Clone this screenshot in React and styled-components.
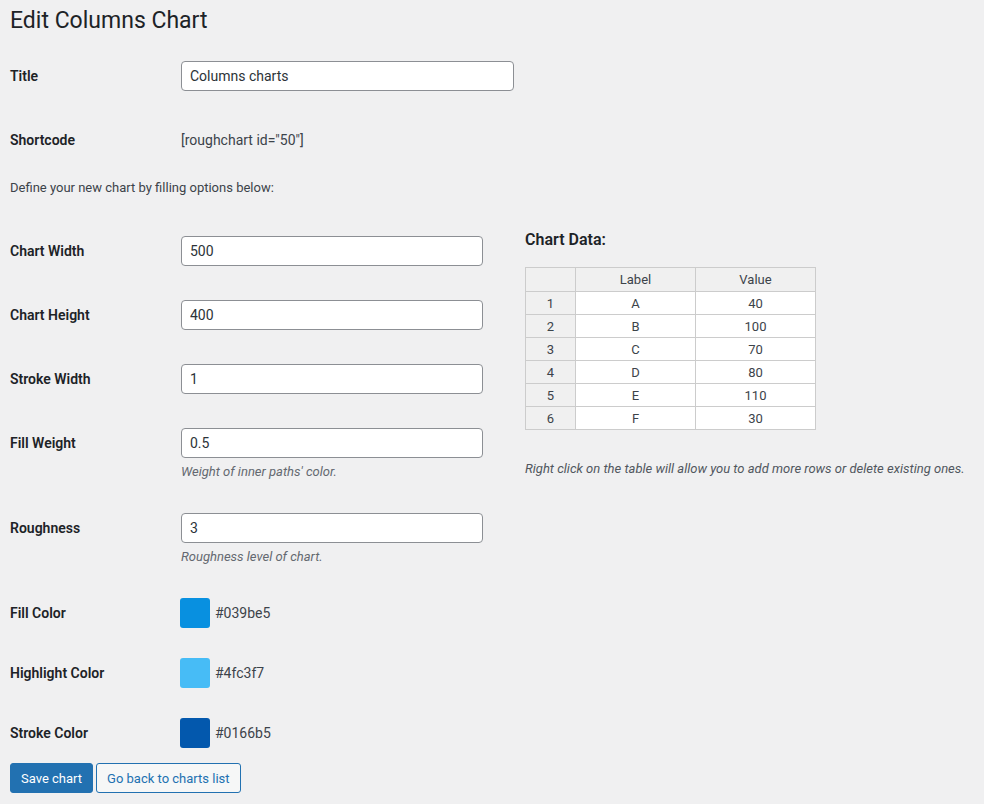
import styled, { createGlobalStyle } from 'styled-components';

const GlobalStyle = createGlobalStyle`
	html, body {
		margin: 0;
		padding: 0;
		background: #f0f0f1;
	}
	body {
		font-family: Roboto, "Liberation Sans", sans-serif;
		font-size: 13px;
		color: #3c434a;
	}
`;

const Wrap = styled.div`
	padding: 0 10px;
	width: 964px;
	height: 804px;
	overflow: hidden;
`;

const Heading = styled.h1`
	margin: 6px 0 0;
	font-size: 23px;
	line-height: 29px;
	font-weight: 400;
	color: #1d2327;
`;

const Form = styled.div`
	margin-top: 9px;
`;

const Row = styled.div`
	display: grid;
	grid-template-columns: 171px 1fr;
	align-items: start;
	padding: ${(p) => (p.$tight ? '17px 0 13px' : '17px 0')};
`;

const Label = styled.div`
	height: 29px;
	display: flex;
	align-items: center;
	font-size: 14px;
	font-weight: 600;
	color: #1d2327;
`;

const Field = styled.div`
	display: flex;
	flex-direction: column;
`;

const TextInput = styled.input`
	box-sizing: border-box;
	width: ${(p) => p.$width}px;
	height: 30px;
	padding: 0 8px;
	border: 1px solid #8c8f94;
	border-radius: 4px;
	background: #fff;
	font-family: inherit;
	font-size: 14px;
	color: #2c3338;
	outline: none;
`;

const Plain = styled.div`
	height: 29px;
	display: flex;
	align-items: center;
	font-size: 14px;
	color: #3c434a;
`;

const Desc = styled.p`
	margin: 5px 0 -2px;
	line-height: 18px;
	font-size: 13px;
	font-style: italic;
	color: #646970;
`;

const Intro = styled.p`
	margin: 8px 0 0;
	line-height: 18px;
	font-size: 13px;
	color: #3c434a;
`;

const Columns = styled.div`
	display: flex;
	gap: 42px;
	margin-top: 22px;
`;

const LeftCol = styled.div`
	width: 473px;
`;

const RightCol = styled.div`
	flex: 1;
`;

const SubHeading = styled.h3`
	margin: 11px 0 0;
	font-size: 16px;
	line-height: 20px;
	font-weight: 600;
	color: #1d2327;
`;

const Table = styled.table`
	margin-top: 17px;
	border-collapse: collapse;
	font-size: 13px;
	color: #3c434a;
	& th, & td {
		border: 1px solid #ccc;
		text-align: center;
		padding: 0;
		height: 22px;
		font-weight: 400;
	}
	& thead th {
		height: 23px;
		background: #f0f0f0;
	}
	& tbody th {
		background: #f0f0f0;
	}
	& td {
		background: #fff;
	}
`;

const Note = styled.p`
	margin: 30px 0 0;
	line-height: 18px;
	font-size: 13px;
	font-style: italic;
	white-space: nowrap;
	color: #50575e;
`;

const ColorPick = styled.div`
	height: 30px;
	display: flex;
	align-items: center;
	gap: 5px;
	margin-left: -1px;
	font-size: 14px;
	color: #3c434a;
`;

const Swatch = styled.span`
	width: 30px;
	height: 30px;
	border-radius: 3px;
	background: ${(p) => p.$color};
`;

const Actions = styled.div`
	display: flex;
	gap: 3px;
	margin-top: 2px;
`;

const Button = styled.button`
	box-sizing: border-box;
	height: 30px;
	padding: 0 10px;
	border-radius: 3px;
	border: 1px solid #2271b1;
	font-family: inherit;
	font-size: 13px;
	cursor: pointer;
	background: ${(p) => (p.$primary ? '#2271b1' : '#f6f7f7')};
	color: ${(p) => (p.$primary ? '#fff' : '#2271b1')};
`;

const fields = [
	{ label: 'Chart Width', value: '500' },
	{ label: 'Chart Height', value: '400' },
	{ label: 'Stroke Width', value: '1' },
	{ label: 'Fill Weight', value: '0.5', desc: "Weight of inner paths' color." },
	{ label: 'Roughness', value: '3', desc: 'Roughness level of chart.' },
];

// swatch shades as they show on screen
const colors = [
	{ label: 'Fill Color', value: '#039be5', shade: '#0890e0' },
	{ label: 'Highlight Color', value: '#4fc3f7', shade: '#47bcf6' },
	{ label: 'Stroke Color', value: '#0166b5', shade: '#0358ad' },
];

const data = [
	['A', '40'],
	['B', '100'],
	['C', '70'],
	['D', '80'],
	['E', '110'],
	['F', '30'],
];

export default function App() {
	return (
		<>
			<GlobalStyle />
			<Wrap>
				<Heading>Edit Columns Chart</Heading>
				<Form>
					<Row>
						<Label>Title</Label>
						<Field>
							<TextInput $width={333} defaultValue="Columns charts" />
						</Field>
					</Row>
					<Row>
						<Label>Shortcode</Label>
						<Plain>[roughchart id="50"]</Plain>
					</Row>
					<Intro>Define your new chart by filling options below:</Intro>
					<Columns>
						<LeftCol>
							{fields.map((f) => (
								<Row key={f.label}>
									<Label>{f.label}</Label>
									<Field>
										<TextInput $width={302} defaultValue={f.value} />
										{f.desc && <Desc>{f.desc}</Desc>}
									</Field>
								</Row>
							))}
							{colors.map((c) => (
								<Row key={c.label} $tight>
									<Label>{c.label}</Label>
									<ColorPick>
										<Swatch $color={c.shade} />
										{c.value}
									</ColorPick>
								</Row>
							))}
						</LeftCol>
						<RightCol>
							<SubHeading>Chart Data:</SubHeading>
							<Table>
								<colgroup>
									<col style={{ width: 50 }} />
									<col style={{ width: 120 }} />
									<col style={{ width: 120 }} />
								</colgroup>
								<thead>
									<tr>
										<th></th>
										<th>Label</th>
										<th>Value</th>
									</tr>
								</thead>
								<tbody>
									{data.map((r, i) => (
										<tr key={i}>
											<th>{i + 1}</th>
											<td>{r[0]}</td>
											<td>{r[1]}</td>
										</tr>
									))}
								</tbody>
							</Table>
							<Note>Right click on the table will allow you to add more rows or delete existing ones.</Note>
						</RightCol>
					</Columns>
					<Actions>
						<Button $primary>Save chart</Button>
						<Button>Go back to charts list</Button>
					</Actions>
				</Form>
			</Wrap>
		</>
	);
}
